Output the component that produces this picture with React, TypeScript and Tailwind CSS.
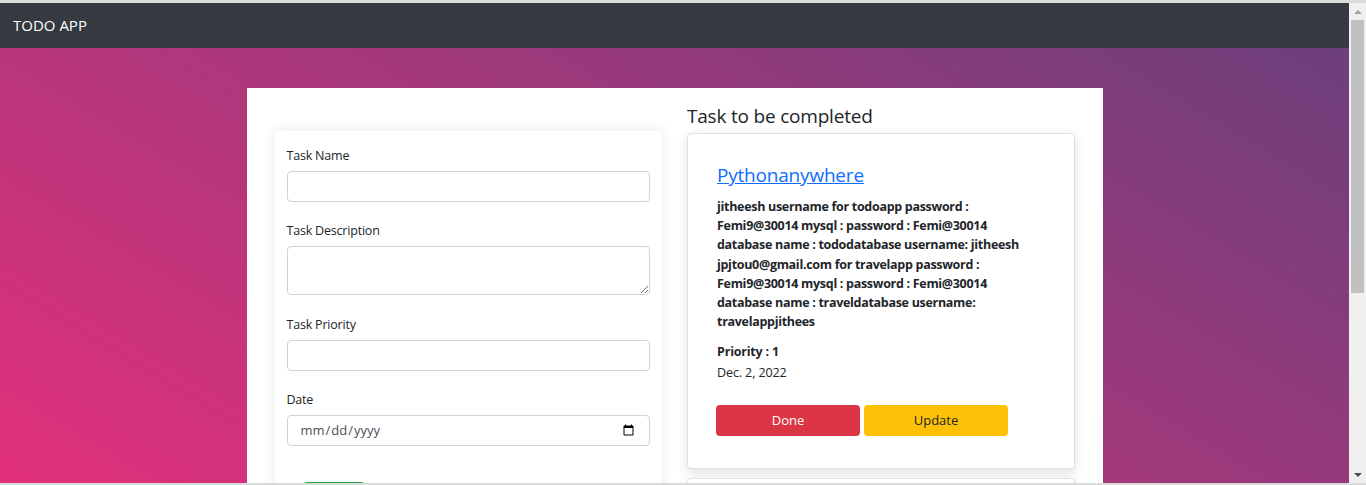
import React from 'react';

const fieldClass =
  'block w-full h-[31px] rounded-[4px] border border-[#ced4da] bg-white px-3 text-[13px] text-[#495057] outline-none';

const labelClass = 'block text-[12.5px] leading-[20px] tracking-[-0.2px] mb-[5px]';

export default function App() {
  return (
    <div className="h-[485px] flex flex-col overflow-hidden bg-white font-['Open_Sans',sans-serif] text-[#212529]">
      <div className="h-[3px] bg-[#dadada]" />
      <div className="flex flex-1 min-h-0">
        <div className="flex flex-1 min-w-0 flex-col">
          {/* Navbar */}
          <nav className="h-[45px] shrink-0 bg-[#343a40] flex items-center px-[13px]">
            <span className="text-white text-[15px]">TODO APP</span>
          </nav>

          {/* Page */}
          <main className="flex-1 min-h-0 overflow-hidden bg-[linear-gradient(31deg,#e2307b,#6c3f7b)] pt-[40px]">
            <div className="mx-auto w-[856px] bg-white px-[28px] pt-[16px] grid grid-cols-2 gap-[25px] pb-10">
              {/* Form */}
              <div className="mt-[27px]">
                <form className="bg-white rounded-[4px] shadow-[0_0_14px_rgba(0,0,0,0.09)] px-[12px] pt-[15px] pb-10">
                  <div>
                    <label className={labelClass}>Task Name</label>
                    <input type="text" className={fieldClass} />
                  </div>
                  <div className="mt-[19px]">
                    <label className={labelClass}>Task Description</label>
                    <textarea className="block w-full h-[49px] rounded-[4px] border border-[#ced4da] bg-white px-3 text-[13px] outline-none" />
                  </div>
                  <div className="mt-[20px]">
                    <label className={labelClass}>Task Priority</label>
                    <input type="text" className={fieldClass} />
                  </div>
                  <div className="mt-[19px]">
                    <label className={labelClass}>Date</label>
                    <input type="date" className={fieldClass} />
                  </div>
                  <button
                    type="button"
                    aria-label="Add task"
                    className="mt-[36px] ml-[16px] h-[31px] w-[62px] rounded-[4px] bg-[#28a745]"
                  />
                </form>
              </div>

              {/* Tasks */}
              <div>
                <h2 className="text-[19px] leading-[24px] font-medium tracking-[-0.2px] mb-[5px]">Task to be completed</h2>
                <div className="rounded-[4px] border border-[#dee2e6] bg-white shadow-[0_4px_12px_rgba(0,0,0,0.12)] px-[29px] pt-[29px] pb-[32px]">
                  <a href="#" className="block text-[19px] leading-[24px] tracking-[-0.2px] text-[#0d6efd] underline mb-[10px]">
                    Pythonanywhere
                  </a>
                  <p className="text-[12.5px] leading-[19.2px] tracking-[-0.3px] font-bold">
                    jitheesh username for todoapp password : Femi9@30014 mysql : password : Femi@30014 database name :
                    tododatabase username: jitheesh jpjtou0@gmail.com for travelapp password : Femi9@30014 mysql : password
                    : Femi@30014 database name : traveldatabase username: travelappjithees
                  </p>
                  <p className="mt-[11px] text-[12.5px] leading-[19px] tracking-[-0.2px] font-bold">Priority : 1</p>
                  <p className="mt-[2px] text-[12.5px] leading-[19px] tracking-[-0.1px]">Dec. 2, 2022</p>
                  <div className="mt-[23px] -ml-[1px] flex gap-[4px]">
                    <button type="button" className="h-[31px] w-[144px] rounded-[4px] bg-[#dc3545] text-white text-[13px]">
                      Done
                    </button>
                    <button type="button" className="h-[31px] w-[144px] rounded-[4px] bg-[#ffc107] text-[#212529] text-[13px]">
                      Update
                    </button>
                  </div>
                </div>
                <div className="mt-[9px] h-[60px] rounded-[4px] border border-[#dee2e6] bg-white shadow-[0_4px_12px_rgba(0,0,0,0.12)]" />
              </div>
            </div>
          </main>
        </div>

        {/* Scrollbar */}
        <div className="w-[17px] shrink-0 bg-[#f0f0f0] flex flex-col items-center">
          <div className="h-[17px] flex items-center justify-center">
            <div className="w-0 h-0 border-x-[4px] border-x-transparent border-b-[4px] border-b-[#a3a3a3]" />
          </div>
          <div className="w-[13px] h-[273px] bg-[#c1c1c1]" />
          <div className="flex-1" />
          <div className="h-[17px] flex items-center justify-center">
            <div className="w-0 h-0 border-x-[4px] border-x-transparent border-t-[4px] border-t-[#505050]" />
          </div>
        </div>
      </div>
      <div className="h-[2px] bg-[#dadada]" />
    </div>
  );
}
